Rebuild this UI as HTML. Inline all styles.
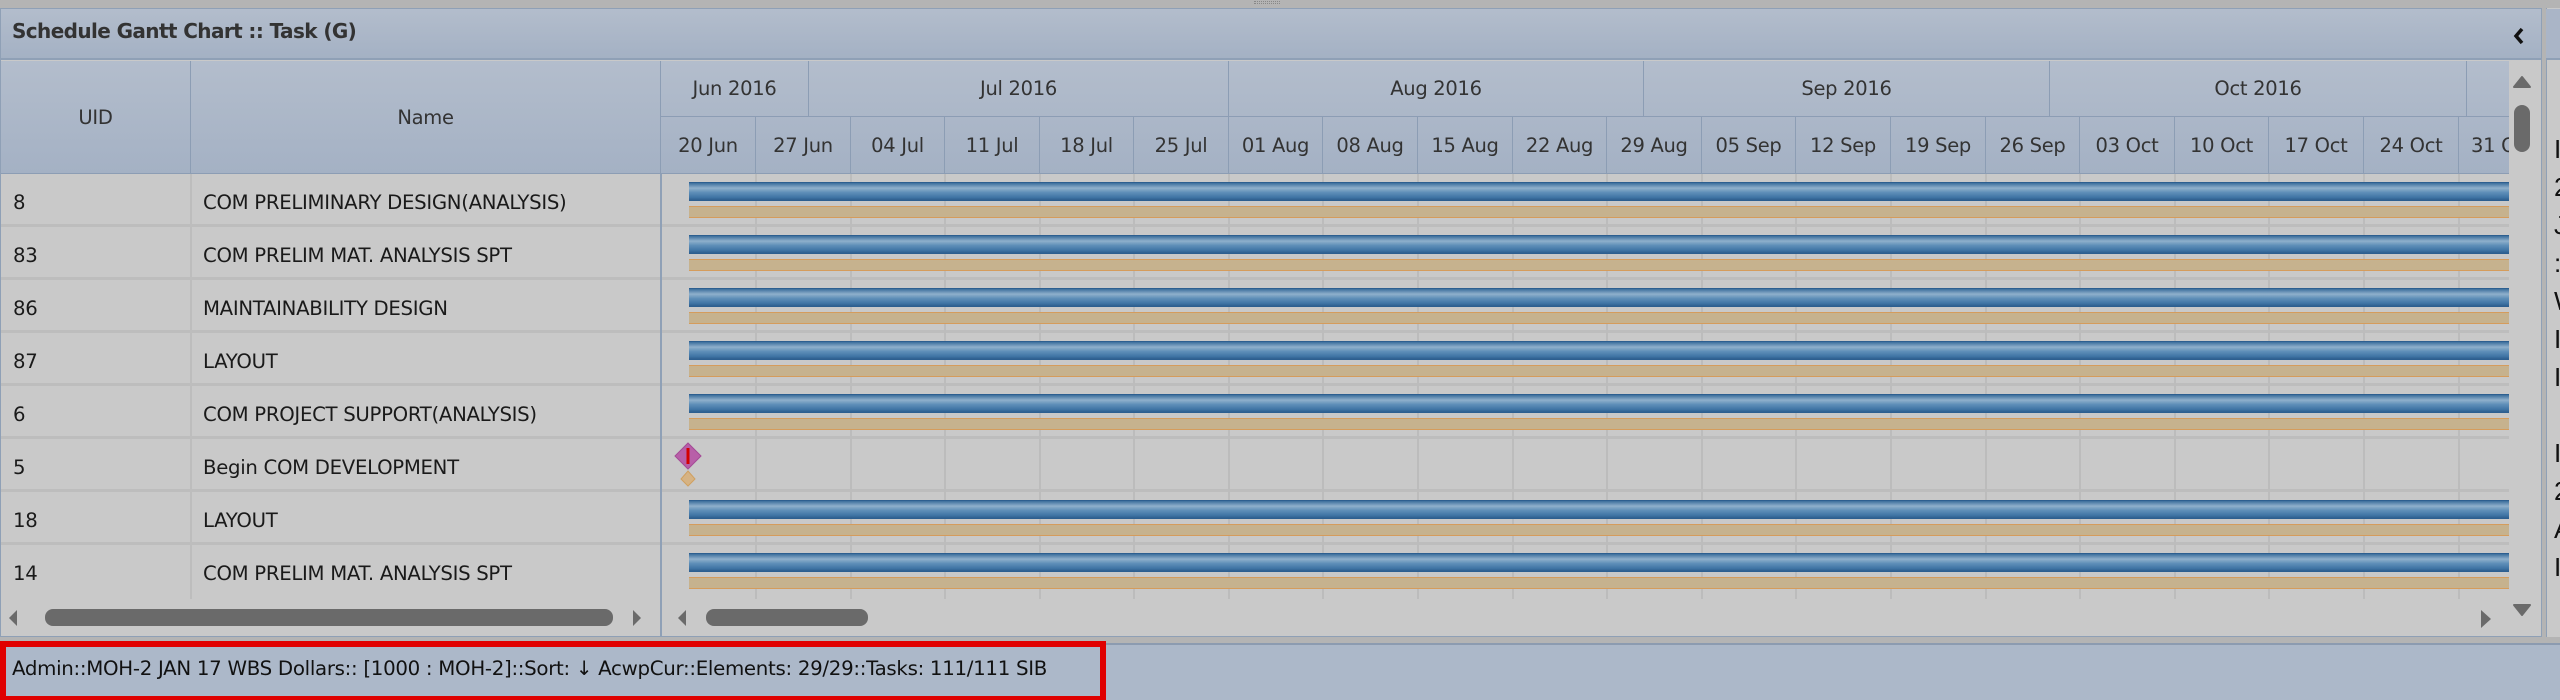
<!DOCTYPE html>
<html><head><meta charset="utf-8">
<style>
*{margin:0;padding:0;box-sizing:border-box}
body{width:2560px;height:700px;overflow:hidden;background:#b4b4b4;font-family:"DejaVu Sans","Liberation Sans",sans-serif;position:relative;color:#1a1a1a}
.a{position:absolute}
.hdr{background:linear-gradient(#b3bdcc,#a4b1c4);}
.hc{position:absolute;border-right:1px solid #8c9db4;border-bottom:1px solid #8c9db4;display:flex;align-items:center;justify-content:center;font-size:19.5px;color:#333;white-space:nowrap;overflow:hidden;letter-spacing:-0.3px}
.row{position:absolute;left:1px;height:53px;border-bottom:3px solid #bdbdbd;background:#c9c9c9}
.c{position:absolute;top:3px;height:50px;display:flex;align-items:center;font-size:19.7px;white-space:nowrap;letter-spacing:-0.3px}
.vl{position:absolute;top:174px;height:425px;width:2px;background:#bcbcbc}
.blue{position:absolute;left:689px;width:1820px;height:19px;background:linear-gradient(#3c6e9c,#8fb0cc 30%,#5f8fb8 55%,#3f74a4 85%,#2f5f8f);border-top:1px solid #2d5f90;border-bottom:1px solid #2d5f90}
.tan{position:absolute;left:689px;width:1820px;height:12px;background:#c6b28e;border-top:1px solid #d59c5c;border-bottom:1px solid #d59c5c}
</style></head><body>
<div class="a" style="left:1254px;top:1px;width:26px;height:3px;border-top:1px dotted #888;border-bottom:1px dotted #888"></div>
<div class="a" style="left:0;top:8px;width:2542px;height:629px;background:#c9c9c9;border:1px solid #8fa0b6"></div>
<div class="a hdr" style="left:1px;top:9px;width:2540px;height:51px;border-bottom:2px solid #8fa0b6"></div>
<div class="a" style="left:12px;top:19px;font-size:20px;font-weight:bold;color:#333;font-family:'DejaVu Sans',sans-serif;letter-spacing:-0.6px">Schedule Gantt Chart :: Task (G)</div>
<svg class="a" style="left:2512px;top:26px" width="14" height="20"><path d="M10 3 L4 10 L10 17" stroke="#111" stroke-width="3.5" fill="none"/></svg>
<div class="a hdr" style="left:1px;top:61px;width:2508px;height:113px"></div>
<div class="hc" style="left:1px;top:61px;width:190px;height:113px">UID</div>
<div class="hc" style="left:191px;top:61px;width:470px;height:113px">Name</div>
<div class="hc" style="left:661px;top:61px;width:148px;height:56px">Jun 2016</div>
<div class="hc" style="left:809px;top:61px;width:420px;height:56px">Jul 2016</div>
<div class="hc" style="left:1229px;top:61px;width:415px;height:56px">Aug 2016</div>
<div class="hc" style="left:1644px;top:61px;width:406px;height:56px">Sep 2016</div>
<div class="hc" style="left:2050px;top:61px;width:417px;height:56px">Oct 2016</div>
<div class="hc" style="left:2467px;top:61px;width:42px;height:56px;border-right:none"></div>
<div class="hc" style="left:661px;top:117px;width:95px;height:57px">20 Jun</div>
<div class="hc" style="left:756px;top:117px;width:95px;height:57px">27 Jun</div>
<div class="hc" style="left:851px;top:117px;width:94px;height:57px">04 Jul</div>
<div class="hc" style="left:945px;top:117px;width:95px;height:57px">11 Jul</div>
<div class="hc" style="left:1040px;top:117px;width:94px;height:57px">18 Jul</div>
<div class="hc" style="left:1134px;top:117px;width:95px;height:57px">25 Jul</div>
<div class="hc" style="left:1229px;top:117px;width:94px;height:57px">01 Aug</div>
<div class="hc" style="left:1323px;top:117px;width:95px;height:57px">08 Aug</div>
<div class="hc" style="left:1418px;top:117px;width:95px;height:57px">15 Aug</div>
<div class="hc" style="left:1513px;top:117px;width:94px;height:57px">22 Aug</div>
<div class="hc" style="left:1607px;top:117px;width:95px;height:57px">29 Aug</div>
<div class="hc" style="left:1702px;top:117px;width:94px;height:57px">05 Sep</div>
<div class="hc" style="left:1796px;top:117px;width:95px;height:57px">12 Sep</div>
<div class="hc" style="left:1891px;top:117px;width:95px;height:57px">19 Sep</div>
<div class="hc" style="left:1986px;top:117px;width:94px;height:57px">26 Sep</div>
<div class="hc" style="left:2080px;top:117px;width:95px;height:57px">03 Oct</div>
<div class="hc" style="left:2175px;top:117px;width:94px;height:57px">10 Oct</div>
<div class="hc" style="left:2269px;top:117px;width:95px;height:57px">17 Oct</div>
<div class="hc" style="left:2364px;top:117px;width:95px;height:57px">24 Oct</div>
<div class="hc" style="left:2459px;top:117px;width:50px;height:57px;border-right:none;justify-content:flex-start;padding-left:12px">31 Oct</div>
<div class="row" style="top:174px;width:2508px"><div class="c" style="left:12px">8</div><div class="c" style="left:202px">COM PRELIMINARY DESIGN(ANALYSIS)</div></div>
<div class="row" style="top:227px;width:2508px"><div class="c" style="left:12px">83</div><div class="c" style="left:202px">COM PRELIM MAT. ANALYSIS SPT</div></div>
<div class="row" style="top:280px;width:2508px"><div class="c" style="left:12px">86</div><div class="c" style="left:202px">MAINTAINABILITY DESIGN</div></div>
<div class="row" style="top:333px;width:2508px"><div class="c" style="left:12px">87</div><div class="c" style="left:202px">LAYOUT</div></div>
<div class="row" style="top:386px;width:2508px"><div class="c" style="left:12px">6</div><div class="c" style="left:202px">COM PROJECT SUPPORT(ANALYSIS)</div></div>
<div class="row" style="top:439px;width:2508px"><div class="c" style="left:12px">5</div><div class="c" style="left:202px">Begin COM DEVELOPMENT</div></div>
<div class="row" style="top:492px;width:2508px"><div class="c" style="left:12px">18</div><div class="c" style="left:202px">LAYOUT</div></div>
<div class="row" style="top:545px;width:2508px;border-bottom:none"><div class="c" style="left:12px">14</div><div class="c" style="left:202px">COM PRELIM MAT. ANALYSIS SPT</div></div>
<div class="vl" style="left:190px;background:#bdbdbd"></div>
<div class="a" style="left:660px;top:174px;width:2px;height:462px;background:#8fa0b6"></div>
<div class="vl" style="left:755px"></div><div class="vl" style="left:850px"></div><div class="vl" style="left:944px"></div><div class="vl" style="left:1039px"></div><div class="vl" style="left:1133px"></div><div class="vl" style="left:1228px"></div><div class="vl" style="left:1322px"></div><div class="vl" style="left:1417px"></div><div class="vl" style="left:1512px"></div><div class="vl" style="left:1606px"></div><div class="vl" style="left:1701px"></div><div class="vl" style="left:1795px"></div><div class="vl" style="left:1890px"></div><div class="vl" style="left:1985px"></div><div class="vl" style="left:2079px"></div><div class="vl" style="left:2174px"></div><div class="vl" style="left:2268px"></div><div class="vl" style="left:2363px"></div><div class="vl" style="left:2458px"></div>
<div class="blue" style="top:182px"></div><div class="tan" style="top:206px"></div>
<div class="blue" style="top:235px"></div><div class="tan" style="top:259px"></div>
<div class="blue" style="top:288px"></div><div class="tan" style="top:312px"></div>
<div class="blue" style="top:341px"></div><div class="tan" style="top:365px"></div>
<div class="blue" style="top:394px"></div><div class="tan" style="top:418px"></div>
<div class="blue" style="top:500px"></div><div class="tan" style="top:524px"></div>
<div class="blue" style="top:553px"></div><div class="tan" style="top:577px"></div>
<svg class="a" style="left:672px;top:441px" width="32" height="50"><path d="M16 2 L29 15 L16 28 L3 15 Z" fill="#b85fa8" stroke="#a44a96"/><rect x="14.5" y="7" width="3" height="16" fill="#d40000"/><path d="M16 30 L23 38 L16 45 L9 38 Z" fill="#d6b384" stroke="#d0a060"/></svg>
<div class="a" style="left:2509px;top:61px;width:32px;height:575px;background:#c9c9c9"></div>
<svg class="a" style="left:2512px;top:74px" width="20" height="16"><path d="M10 3 L18 13 L2 13 Z" fill="#6a6a6a" stroke="#6a6a6a" stroke-linejoin="round" stroke-width="2"/></svg>
<div class="a" style="left:2514px;top:105px;width:16px;height:47px;border-radius:8px;background:#6a6a6a"></div>
<svg class="a" style="left:2512px;top:602px" width="20" height="16"><path d="M2 3 L18 3 L10 13 Z" fill="#6a6a6a" stroke="#6a6a6a" stroke-linejoin="round" stroke-width="2"/></svg>
<div class="a" style="left:1px;top:599px;width:2508px;height:37px;background:#c9c9c9"></div>
<div class="a" style="left:660px;top:599px;width:2px;height:37px;background:#8fa0b6"></div>
<svg class="a" style="left:6px;top:608px" width="14" height="20"><path d="M11 2 L3 10 L11 18 Z" fill="#6a6a6a"/></svg>
<div class="a" style="left:45px;top:609px;width:568px;height:17px;border-radius:8px;background:#6a6a6a"></div>
<svg class="a" style="left:630px;top:608px" width="14" height="20"><path d="M3 2 L11 10 L3 18 Z" fill="#6a6a6a"/></svg>
<svg class="a" style="left:675px;top:608px" width="14" height="20"><path d="M11 2 L3 10 L11 18 Z" fill="#6a6a6a"/></svg>
<div class="a" style="left:706px;top:609px;width:162px;height:17px;border-radius:8px;background:#6a6a6a"></div>
<svg class="a" style="left:2478px;top:608px" width="16" height="22"><path d="M3 2 L13 11 L3 20 Z" fill="#6a6a6a"/></svg>
<div class="a" style="left:0;top:643px;width:2560px;height:57px;background:#acb8c9;border-top:2px solid #8c9bb0"></div>
<div class="a" style="left:0;top:641px;width:1106px;height:59px;border:6px solid #e00000;border-bottom-width:4px"></div>
<div class="a" style="left:12px;top:657px;font-size:19.8px;color:#111;white-space:nowrap;letter-spacing:-0.3px">Admin::MOH-2 JAN 17 WBS Dollars:: [1000 : MOH-2]::Sort: ↓ AcwpCur::Elements: 29/29::Tasks: 111/111 SIB</div>
<div class="a" style="left:2546px;top:8px;width:14px;height:629px;background:#c9c9c9;border-left:1px solid #8fa0b6"></div>
<div class="a" style="left:2546px;top:9px;width:14px;height:51px;background:#aab5c7;border-bottom:2px solid #8fa0b6"></div>
<div class="a" style="left:2554px;top:130px;font-size:26px;line-height:38px;color:#111;font-family:'Liberation Sans',sans-serif;width:20px">I<br>2<br>J<br>:<br>W<br>I<br>I<br><br>I<br>2<br>A<br>I</div>
</body></html>
